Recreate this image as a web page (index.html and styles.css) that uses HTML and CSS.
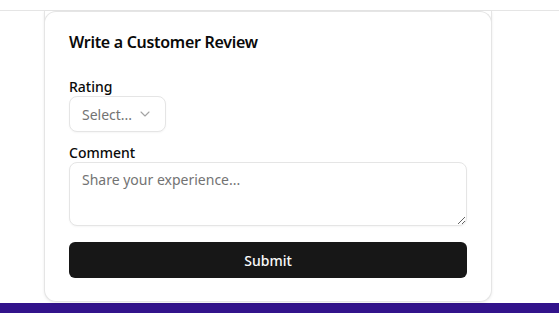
FILE: index.html
```html
<!DOCTYPE html>
<html>
<head>
<meta charset="utf-8">
<link rel="stylesheet" href="styles.css">
</head>
<body>
<div class="topbar"></div>
<main class="main">
  <section class="card">
    <h2 class="title">Write a Customer Review</h2>
    <form class="form">
      <div class="field">
        <label class="label">Rating</label>
        <button type="button" class="select">
          <span class="select-value">Select...</span>
          <svg class="chevron" width="16" height="16" viewBox="0 0 24 24" fill="none" stroke="#a3a3a3" stroke-width="1.6" stroke-linecap="round" stroke-linejoin="round"><path d="m6 9 6 6 6-6"/></svg>
        </button>
      </div>
      <div class="field">
        <label class="label">Comment</label>
        <textarea class="textarea" placeholder="Share your experience..."></textarea>
      </div>
      <button type="button" class="submit">Submit</button>
    </form>
  </section>
</main>
<footer class="footer"></footer>
</body>
</html>
```

FILE: styles.css
```css
* { box-sizing: border-box; }
html, body { margin: 0; padding: 0; background: #fff; }
body {
  font-family: "Noto Sans", "DejaVu Sans", sans-serif;
  color: #0a0a0a;
  height: 313px;
  overflow: hidden;
}
.topbar {
  height: 11px;
  border-bottom: 1px solid #e5e5e5;
}
.main {
  padding-left: 44px;
  padding-bottom: 1px;
}
.card {
  width: 448px;
  height: 291px;
  border: 1px solid #e5e5e5;
  border-top: none;
  border-radius: 0 0 12px 12px;
  box-shadow: 0 1px 3px rgba(0,0,0,0.08);
  padding: 17px 24px 24px;
  background: #fff;
  position: relative;
}
.card::before {
  content: "";
  position: absolute;
  left: -1px; right: -1px; top: 0;
  height: 14px;
  border: 1px solid #e5e5e5;
  border-bottom: none;
  border-radius: 12px 12px 0 0;
}
.title {
  margin: 0;
  font-size: 16px;
  line-height: 28px;
  font-weight: 600;
  letter-spacing: -0.3px;
}
.form {
  margin-top: 22px;
  display: flex;
  flex-direction: column;
}
.field {
  display: flex;
  flex-direction: column;
  gap: 0;
  margin-bottom: 12px;
}
.label {
  font-size: 14px;
  line-height: 18px;
  font-weight: 500;
}
.select {
  width: 97px;
  height: 36px;
  border: 1px solid #e5e5e5;
  border-radius: 8px;
  background: #fff;
  display: flex;
  align-items: center;
  justify-content: space-between;
  padding: 0 12px 0 12px;
  font-family: inherit;
  font-size: 14px;
  color: #737373;
  box-shadow: 0 1px 2px rgba(0,0,0,0.04);
}
.chevron { flex: none; }
.textarea {
  width: 398px;
  height: 64px;
  border: 1px solid #e5e5e5;
  border-radius: 8px;
  padding: 7px 12px;
  font-family: inherit;
  font-size: 14px;
  line-height: 20px;
  color: #0a0a0a;
  box-shadow: 0 1px 2px rgba(0,0,0,0.04);
}
.textarea::placeholder { color: #737373; }
.submit {
  margin-top: 4px;
  height: 36px;
  width: 398px;
  border: none;
  border-radius: 6px;
  background: #171717;
  color: #fafafa;
  font-family: inherit;
  font-size: 14px;
  font-weight: 500;
}
.footer {
  height: 10px;
  background: #32138b;
}
```
